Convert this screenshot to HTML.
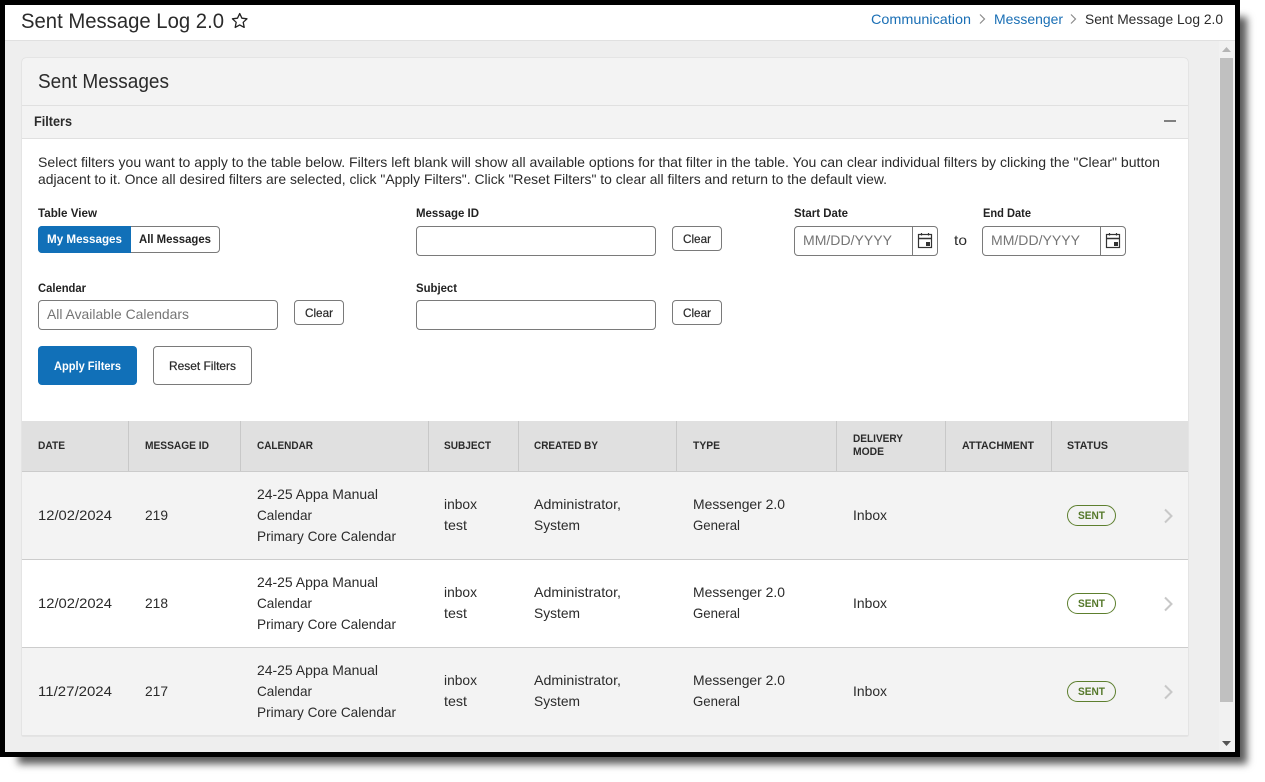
<!DOCTYPE html>
<html lang="en"><head><meta charset="utf-8"><title>Sent Message Log 2.0</title>
<style>
html,body{margin:0;padding:0;width:1265px;height:782px;background:#fff;overflow:hidden}
div{position:absolute;box-sizing:border-box}
svg{position:absolute;left:0;top:0}
text{font-family:"Liberation Sans",sans-serif;font-size:14px;fill:#2b2b2b;white-space:pre}
.b{font-weight:bold}
.l{font-size:12px;font-weight:bold;fill:#222}
.h{font-size:11px;font-weight:bold;fill:#2b2b2b}
.a{fill:#1a6fb5}
.p{fill:#757575}
.c{font-size:12px;stroke:#222;stroke-width:.2}
.box{background:#fff;border:1px solid #7a7a7a;border-radius:4px}
</style></head><body>
<div style="left:18px;top:17px;width:1229px;height:747px;background:#5a5a5a;filter:blur(4px)"></div>
<div style="left:0;top:0;width:1240px;height:757px;background:#000"></div>
<div style="left:5px;top:5px;width:1230px;height:747px;background:#eee;overflow:hidden"></div>
<div style="left:5px;top:5px;width:1230px;height:36px;background:#fff;border-bottom:1px solid #e0e0e0"></div>
<div style="left:1219px;top:41px;width:16px;height:711px;background:#f1f1f1"></div>
<div style="left:1220px;top:58px;width:13px;height:644px;background:#c0c0c0"></div>
<div style="left:22px;top:58px;width:1166px;height:678px;background:#f3f3f3;border-radius:4px 4px 0 0;box-shadow:0 0 1px rgba(0,0,0,.25)"></div>
<div style="left:22px;top:105px;width:1166px;height:34px;background:#f3f3f3;border-top:1px solid #e0e0e0;border-bottom:1px solid #e0e0e0"></div>
<div style="left:22px;top:139px;width:1166px;height:282px;background:#fff"></div>
<div style="left:1164px;top:120px;width:12px;height:2px;background:#808080"></div>

<div style="left:38px;top:226px;width:182px;height:27px;background:#fff;border:1px solid #7a7a7a;border-radius:4px"></div>
<div style="left:38px;top:226px;width:93px;height:27px;background:#1170b8;border-radius:4px 0 0 4px"></div>
<div class="box" style="left:416px;top:226px;width:240px;height:30px"></div>
<div class="box" style="left:672px;top:226px;width:50px;height:25px"></div>
<div class="box" style="left:794px;top:226px;width:144px;height:30px"></div>
<div style="left:912px;top:226px;width:1px;height:30px;background:#7a7a7a"></div>
<div class="box" style="left:982px;top:226px;width:144px;height:30px"></div>
<div style="left:1100px;top:226px;width:1px;height:30px;background:#7a7a7a"></div>
<div class="box" style="left:38px;top:300px;width:240px;height:30px"></div>
<div class="box" style="left:294px;top:300px;width:50px;height:25px"></div>
<div class="box" style="left:416px;top:300px;width:240px;height:30px"></div>
<div class="box" style="left:672px;top:300px;width:50px;height:25px"></div>
<div style="left:38px;top:346px;width:99px;height:39px;background:#1170b8;border-radius:4px"></div>
<div class="box" style="left:153px;top:346px;width:99px;height:39px"></div>

<div style="left:22px;top:421px;width:1166px;height:51px;background:#e0e0e0;border-bottom:1px solid #cbcbcb"></div>
<div style="left:128px;top:421px;width:1px;height:50px;background:#c8c8c8"></div>
<div style="left:240px;top:421px;width:1px;height:50px;background:#c8c8c8"></div>
<div style="left:428px;top:421px;width:1px;height:50px;background:#c8c8c8"></div>
<div style="left:518px;top:421px;width:1px;height:50px;background:#c8c8c8"></div>
<div style="left:676px;top:421px;width:1px;height:50px;background:#c8c8c8"></div>
<div style="left:836px;top:421px;width:1px;height:50px;background:#c8c8c8"></div>
<div style="left:945px;top:421px;width:1px;height:50px;background:#c8c8c8"></div>
<div style="left:1051px;top:421px;width:1px;height:50px;background:#c8c8c8"></div>
<div style="left:22px;top:472px;width:1166px;height:88px;background:#f3f3f3;border-bottom:1px solid #ccc"></div>
<div style="left:22px;top:560px;width:1166px;height:88px;background:#fff;border-bottom:1px solid #ccc"></div>
<div style="left:22px;top:648px;width:1166px;height:88px;background:#f3f3f3;border-bottom:1px solid #e2e2e2"></div>
<div style="left:1067px;top:505px;width:49px;height:21px;border:1px solid #5d7f2e;border-radius:11px"></div>
<div style="left:1067px;top:593px;width:49px;height:21px;border:1px solid #5d7f2e;border-radius:11px"></div>
<div style="left:1067px;top:681px;width:49px;height:21px;border:1px solid #5d7f2e;border-radius:11px"></div>

<svg width="1265" height="782" viewBox="0 0 1265 782">
<path d="M239.700 13.500l2.200 4.700 5.100.6-3.800 3.500 1 5.100-4.500-2.500-4.500 2.500 1-5.100-3.800-3.500 5.100-.6z" fill="none" stroke="#222" stroke-width="1.300" stroke-linejoin="round"/>
<path d="M980 14.500l4.500 4.500-4.500 4.500M1071 14.500l4.500 4.500-4.500 4.500" fill="none" stroke="#8a8a8a" stroke-width="1.200"/>
<path d="M1222 52l4.500-5 4.500 5z" fill="#b5b5b5"/><path d="M1222 741l4.500 5 4.500-5z" fill="#555"/>
<g fill="none" stroke="#333"><rect x="918.500" y="234.500" width="13" height="13" stroke-width="1.200"/><path d="M918 238.500h14" stroke-width="1.500"/><path d="M921.500 233v2.500M928.500 233v2.500" stroke-width="1.200"/><rect x="926" y="242" width="4" height="4" fill="#333" stroke="none"/></g>
<g fill="none" stroke="#333"><rect x="1106.500" y="234.500" width="13" height="13" stroke-width="1.200"/><path d="M1106 238.500h14" stroke-width="1.500"/><path d="M1109.500 233v2.500M1116.500 233v2.500" stroke-width="1.200"/><rect x="1114" y="242" width="4" height="4" fill="#333" stroke="none"/></g>
<g fill="none" stroke="#c8c8c8" stroke-width="2"><path d="M1165 509.500l6.500 6.500-6.500 6.500M1165 597.500l6.500 6.500-6.500 6.500M1165 685.500l6.500 6.500-6.500 6.500"/></g>

<text x="21" y="28" style="font-size:21px" textLength="203" lengthAdjust="spacingAndGlyphs">Sent Message Log 2.0</text>
<text class="a" x="871" y="24" textLength="100" lengthAdjust="spacingAndGlyphs">Communication</text>
<text class="a" x="994" y="24" textLength="69" lengthAdjust="spacingAndGlyphs">Messenger</text>
<text x="1085" y="24" textLength="138" lengthAdjust="spacingAndGlyphs">Sent Message Log 2.0</text>
<text x="38" y="88" style="font-size:20px" textLength="131" lengthAdjust="spacingAndGlyphs">Sent Messages</text>
<text class="b" x="34" y="126" textLength="38" lengthAdjust="spacingAndGlyphs">Filters</text>
<text x="38" y="167" textLength="1122" lengthAdjust="spacingAndGlyphs">Select filters you want to apply to the table below. Filters left blank will show all available options for that filter in the table. You can clear individual filters by clicking the "Clear" button</text>
<text x="38" y="184" textLength="849" lengthAdjust="spacingAndGlyphs">adjacent to it. Once all desired filters are selected, click "Apply Filters". Click "Reset Filters" to clear all filters and return to the default view.</text>
<text class="l" x="38" y="217" textLength="59" lengthAdjust="spacingAndGlyphs">Table View</text>
<text class="l" x="416" y="217" textLength="63" lengthAdjust="spacingAndGlyphs">Message ID</text>
<text class="l" x="794" y="217" textLength="54" lengthAdjust="spacingAndGlyphs">Start Date</text>
<text class="l" x="983" y="217" textLength="48" lengthAdjust="spacingAndGlyphs">End Date</text>
<text class="l" x="38" y="292" textLength="48" lengthAdjust="spacingAndGlyphs">Calendar</text>
<text class="l" x="416" y="292" textLength="41" lengthAdjust="spacingAndGlyphs">Subject</text>
<text class="l" x="47" y="243" style="fill:#fff" textLength="75" lengthAdjust="spacingAndGlyphs">My Messages</text>
<text class="l" x="139" y="243" textLength="72" lengthAdjust="spacingAndGlyphs">All Messages</text>
<text class="c" x="683" y="243" textLength="28" lengthAdjust="spacingAndGlyphs">Clear</text>
<text class="c" x="305" y="317" textLength="28" lengthAdjust="spacingAndGlyphs">Clear</text>
<text class="c" x="683" y="317" textLength="28" lengthAdjust="spacingAndGlyphs">Clear</text>
<text class="p" x="803" y="245" textLength="89" lengthAdjust="spacingAndGlyphs">MM/DD/YYYY</text>
<text x="954" y="245" textLength="13" lengthAdjust="spacingAndGlyphs">to</text>
<text class="p" x="991" y="245" textLength="89" lengthAdjust="spacingAndGlyphs">MM/DD/YYYY</text>
<text class="p" x="47" y="319" textLength="142" lengthAdjust="spacingAndGlyphs">All Available Calendars</text>
<text class="l" x="54" y="370" style="fill:#fff" textLength="67" lengthAdjust="spacingAndGlyphs">Apply Filters</text>
<text class="c" x="169" y="370" textLength="67" lengthAdjust="spacingAndGlyphs">Reset Filters</text>

<text class="h" x="38" y="449" textLength="27" lengthAdjust="spacingAndGlyphs">DATE</text>
<text class="h" x="145" y="449" textLength="64" lengthAdjust="spacingAndGlyphs">MESSAGE ID</text>
<text class="h" x="257" y="449" textLength="56" lengthAdjust="spacingAndGlyphs">CALENDAR</text>
<text class="h" x="444" y="449" textLength="47" lengthAdjust="spacingAndGlyphs">SUBJECT</text>
<text class="h" x="534" y="449" textLength="64" lengthAdjust="spacingAndGlyphs">CREATED BY</text>
<text class="h" x="693" y="449" textLength="27" lengthAdjust="spacingAndGlyphs">TYPE</text>
<text class="h" x="853" y="442" textLength="50" lengthAdjust="spacingAndGlyphs">DELIVERY</text>
<text class="h" x="853" y="455" textLength="31" lengthAdjust="spacingAndGlyphs">MODE</text>
<text class="h" x="962" y="449" textLength="72" lengthAdjust="spacingAndGlyphs">ATTACHMENT</text>
<text class="h" x="1067" y="449" textLength="41" lengthAdjust="spacingAndGlyphs">STATUS</text>

<g>
<text x="38" y="520" textLength="74" lengthAdjust="spacingAndGlyphs">12/02/2024</text>
<text x="145" y="520" textLength="23" lengthAdjust="spacingAndGlyphs">219</text>
<text x="257" y="499" textLength="121" lengthAdjust="spacingAndGlyphs">24-25 Appa Manual</text>
<text x="257" y="520" textLength="55" lengthAdjust="spacingAndGlyphs">Calendar</text>
<text x="257" y="541" textLength="139" lengthAdjust="spacingAndGlyphs">Primary Core Calendar</text>
<text x="444" y="509" textLength="33" lengthAdjust="spacingAndGlyphs">inbox</text>
<text x="444" y="530" textLength="23" lengthAdjust="spacingAndGlyphs">test</text>
<text x="534" y="509" textLength="87" lengthAdjust="spacingAndGlyphs">Administrator,</text>
<text x="534" y="530" textLength="46" lengthAdjust="spacingAndGlyphs">System</text>
<text x="693" y="509" textLength="92" lengthAdjust="spacingAndGlyphs">Messenger 2.0</text>
<text x="693" y="530" textLength="47" lengthAdjust="spacingAndGlyphs">General</text>
<text x="853" y="520" textLength="34" lengthAdjust="spacingAndGlyphs">Inbox</text>
<text class="h" x="1078" y="519" style="fill:#55782a" textLength="27" lengthAdjust="spacingAndGlyphs">SENT</text>
</g>
<g>
<text x="38" y="608" textLength="74" lengthAdjust="spacingAndGlyphs">12/02/2024</text>
<text x="145" y="608" textLength="23" lengthAdjust="spacingAndGlyphs">218</text>
<text x="257" y="587" textLength="121" lengthAdjust="spacingAndGlyphs">24-25 Appa Manual</text>
<text x="257" y="608" textLength="55" lengthAdjust="spacingAndGlyphs">Calendar</text>
<text x="257" y="629" textLength="139" lengthAdjust="spacingAndGlyphs">Primary Core Calendar</text>
<text x="444" y="597" textLength="33" lengthAdjust="spacingAndGlyphs">inbox</text>
<text x="444" y="618" textLength="23" lengthAdjust="spacingAndGlyphs">test</text>
<text x="534" y="597" textLength="87" lengthAdjust="spacingAndGlyphs">Administrator,</text>
<text x="534" y="618" textLength="46" lengthAdjust="spacingAndGlyphs">System</text>
<text x="693" y="597" textLength="92" lengthAdjust="spacingAndGlyphs">Messenger 2.0</text>
<text x="693" y="618" textLength="47" lengthAdjust="spacingAndGlyphs">General</text>
<text x="853" y="608" textLength="34" lengthAdjust="spacingAndGlyphs">Inbox</text>
<text class="h" x="1078" y="607" style="fill:#55782a" textLength="27" lengthAdjust="spacingAndGlyphs">SENT</text>
</g>
<g>
<text x="38" y="696" textLength="74" lengthAdjust="spacingAndGlyphs">11/27/2024</text>
<text x="145" y="696" textLength="23" lengthAdjust="spacingAndGlyphs">217</text>
<text x="257" y="675" textLength="121" lengthAdjust="spacingAndGlyphs">24-25 Appa Manual</text>
<text x="257" y="696" textLength="55" lengthAdjust="spacingAndGlyphs">Calendar</text>
<text x="257" y="717" textLength="139" lengthAdjust="spacingAndGlyphs">Primary Core Calendar</text>
<text x="444" y="685" textLength="33" lengthAdjust="spacingAndGlyphs">inbox</text>
<text x="444" y="706" textLength="23" lengthAdjust="spacingAndGlyphs">test</text>
<text x="534" y="685" textLength="87" lengthAdjust="spacingAndGlyphs">Administrator,</text>
<text x="534" y="706" textLength="46" lengthAdjust="spacingAndGlyphs">System</text>
<text x="693" y="685" textLength="92" lengthAdjust="spacingAndGlyphs">Messenger 2.0</text>
<text x="693" y="706" textLength="47" lengthAdjust="spacingAndGlyphs">General</text>
<text x="853" y="696" textLength="34" lengthAdjust="spacingAndGlyphs">Inbox</text>
<text class="h" x="1078" y="695" style="fill:#55782a" textLength="27" lengthAdjust="spacingAndGlyphs">SENT</text>
</g>
</svg>
</body></html>
